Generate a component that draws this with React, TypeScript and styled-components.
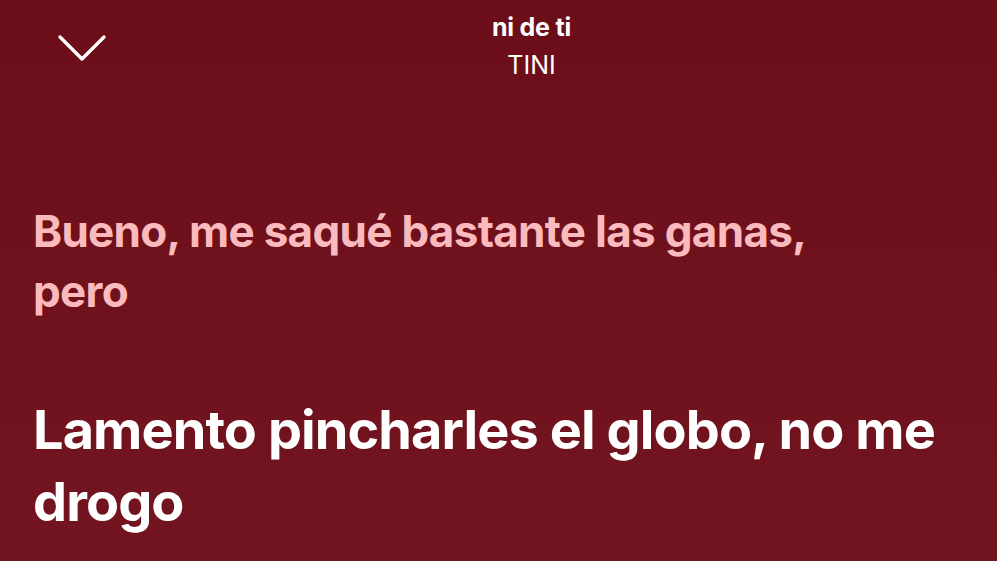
import React from "react";
import styled, { createGlobalStyle } from "styled-components";

const GlobalStyle = createGlobalStyle`
  html, body {
    margin: 0;
    padding: 0;
    height: 100%;
  }
  body {
    font-family: Inter, "Noto Sans", sans-serif;
    background: #6c0f1b;
  }
`;

const Screen = styled.div`
  width: 997px;
  height: 561px;
  overflow: hidden;
  background: linear-gradient(180deg, #6b0e1a 0%, #731520 100%);
  display: flex;
  flex-direction: column;
`;

const Header = styled.header`
  display: grid;
  grid-template-columns: 120px 1fr 54px;
  align-items: start;
  padding-top: 12px;
`;

const CloseButton = styled.button`
  background: none;
  border: none;
  padding: 0;
  margin: 22px 0 0 57px;
  width: 50px;
  height: 30px;
  cursor: pointer;
  display: flex;
  align-items: center;
  justify-content: center;
`;

const TrackInfo = styled.div`
  display: flex;
  flex-direction: column;
  align-items: center;
  color: #fff;
`;

const TrackTitle = styled.div`
  font-weight: 700;
  font-size: 25px;
  line-height: 30px;
  letter-spacing: -0.2px;
`;

const TrackArtist = styled.div`
  font-weight: 400;
  font-size: 25px;
  line-height: 30px;
  margin-top: 8px;
`;

const Lyrics = styled.main`
  display: flex;
  flex-direction: column;
  gap: 73px;
  padding: 121px 40px 0 33px;
`;

const Line = styled.p<{ $active?: boolean }>`
  margin: 0;
  font-weight: 700;
  font-size: ${(p) => (p.$active ? "54px" : "44px")};
  line-height: ${(p) => (p.$active ? "72px" : "60px")};
  letter-spacing: ${(p) => (p.$active ? "-0.9px" : "-0.7px")};
  color: ${(p) => (p.$active ? "#ffffff" : "#fbbabd")};
`;

const ChevronDown = () => (
  <svg width="50" height="30" viewBox="0 0 50 30" fill="none">
    <path
      d="M3 3 L25 25 L47 3"
      stroke="#fff"
      strokeWidth="3.4"
      strokeLinecap="round"
      strokeLinejoin="round"
    />
  </svg>
);

const App = () => {
  return (
    <>
      <GlobalStyle />
      <Screen>
        <Header>
          <CloseButton aria-label="Minimizar">
            <ChevronDown />
          </CloseButton>
          <TrackInfo>
            <TrackTitle>ni de ti</TrackTitle>
            <TrackArtist>TINI</TrackArtist>
          </TrackInfo>
          <div />
        </Header>
        <Lyrics>
          <Line>
            Bueno, me saqué bastante las ganas,
            <br />
            pero
          </Line>
          <Line $active>
            Lamento pincharles el globo, no me
            <br />
            drogo
          </Line>
        </Lyrics>
      </Screen>
    </>
  );
};

export default App;
